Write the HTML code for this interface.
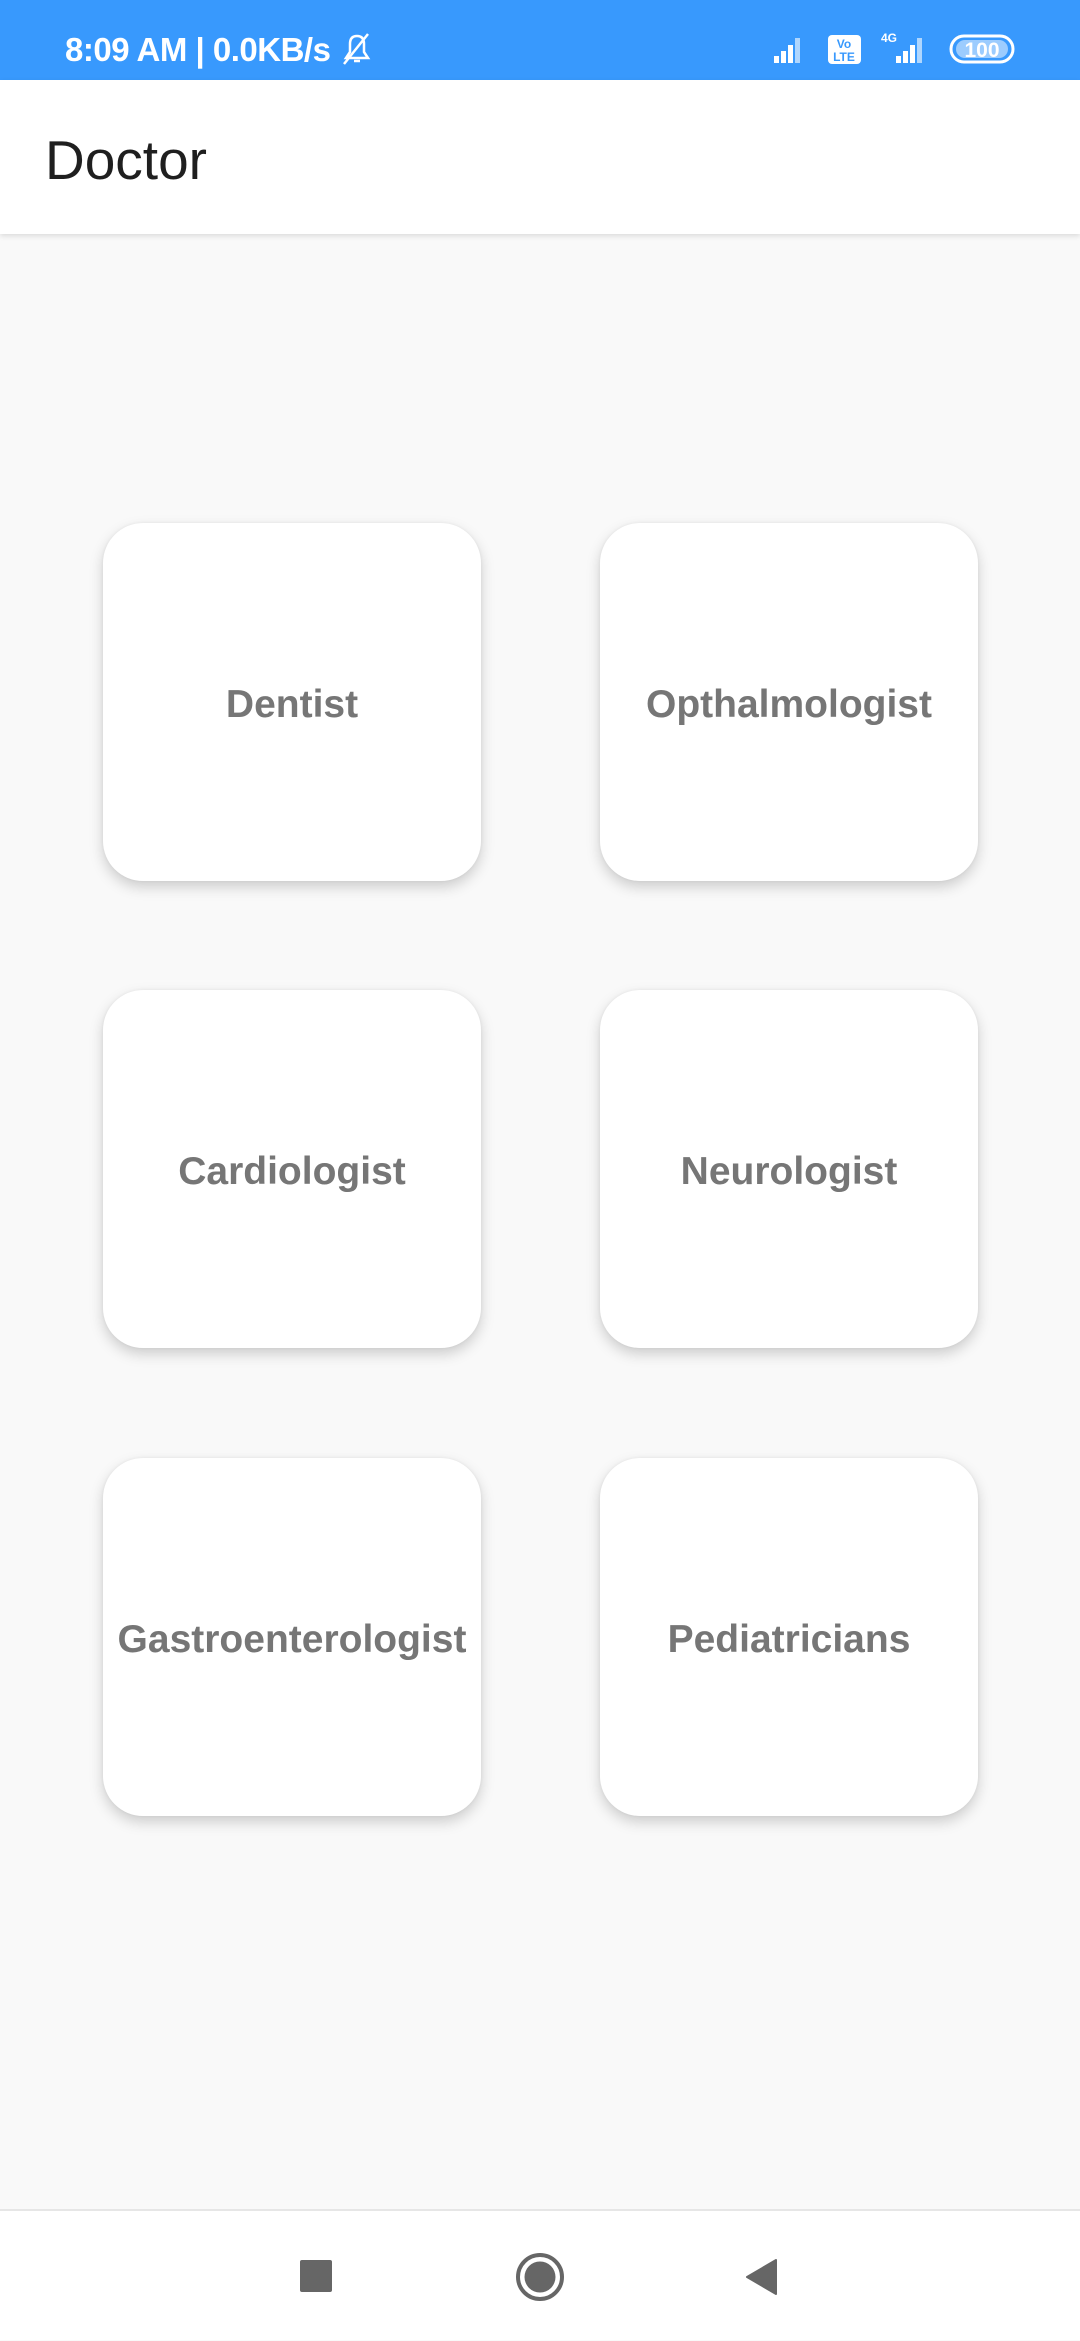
<!DOCTYPE html>
<html><head><meta charset="utf-8"><style>
*{margin:0;padding:0;box-sizing:border-box}
body{width:1080px;height:2340px;background:#f9f9f9;font-family:"Liberation Sans",sans-serif;position:relative;overflow:hidden}
.sb{position:absolute;left:0;top:0;width:1080px;height:80px;background:#3899fd;color:#fff}
.sb .t{position:absolute;left:65px;top:31px;font-size:33px;font-weight:bold;letter-spacing:-0.5px}
.ab{position:absolute;left:0;top:80px;width:1080px;height:154px;background:#fff;box-shadow:0 2px 5px rgba(0,0,0,0.12)}
.ab span{position:absolute;left:45px;top:48px;font-size:55px;color:#1f1f1f}
.card{position:absolute;width:378px;height:358px;background:#fff;border-radius:40px;box-shadow:0 6px 14px rgba(0,0,0,0.18),0 0 3px rgba(0,0,0,0.06);display:flex;align-items:center;justify-content:center;font-size:39px;font-weight:bold;color:#767676;padding-top:6px}
.nav{position:absolute;left:0;top:2209px;width:1080px;height:131px;background:#fff;border-top:2px solid #e6e6e6}
</style></head><body>
<div class="sb"><span class="t">8:09 AM | 0.0KB/s</span>
<svg style="position:absolute;left:338px;top:32px" width="38" height="34" viewBox="0 0 38 34"><path d="M8 26 L30 26 L26 20 L26 12 Q26 4 19 4 Q12 4 12 12 L12 20 Z M16 29 L22 29 M6 32 L30 2" stroke="#fff" stroke-width="2.5" fill="none"/></svg>
<svg style="position:absolute;left:770px;top:30px" width="250" height="36" viewBox="0 0 250 36">
<g fill="#fff"><rect x="4" y="26" width="5" height="7"/><rect x="11" y="21" width="5" height="12"/><rect x="18" y="15" width="5" height="18"/><rect x="25" y="8" width="5" height="25" opacity=".6"/>
<rect x="58" y="5" width="33" height="29" rx="4"/></g>
<text x="74" y="18" font-size="12" font-weight="bold" fill="#3899fd" text-anchor="middle" font-family="Liberation Sans">Vo</text>
<text x="74" y="31" font-size="12" font-weight="bold" fill="#3899fd" text-anchor="middle" font-family="Liberation Sans">LTE</text>
<text x="111" y="12" font-size="12" font-weight="bold" fill="#fff" font-family="Liberation Sans">4G</text>
<g fill="#fff"><rect x="126" y="26" width="5" height="7"/><rect x="133" y="21" width="5" height="12"/><rect x="140" y="15" width="5" height="18"/><rect x="147" y="8" width="5" height="25" opacity=".6"/></g>
<rect x="181" y="6" width="62" height="26" rx="13" fill="none" stroke="#fff" stroke-width="3"/>
<rect x="186" y="10" width="52" height="18" rx="9" fill="#fff" opacity=".5"/>
<text x="212" y="27" font-size="21" font-weight="bold" fill="#fff" text-anchor="middle" font-family="Liberation Sans">100</text>
</svg></div>
<div class="ab"><span>Doctor</span></div>
<div class="card" style="left:103px;top:523px">Dentist</div>
<div class="card" style="left:600px;top:523px">Opthalmologist</div>
<div class="card" style="left:103px;top:990px">Cardiologist</div>
<div class="card" style="left:600px;top:990px">Neurologist</div>
<div class="card" style="left:103px;top:1458px">Gastroenterologist</div>
<div class="card" style="left:600px;top:1458px">Pediatricians</div>
<div class="nav">
<svg style="position:absolute;left:0;top:-1px" width="1080" height="131" viewBox="0 0 1080 131">
<rect x="300" y="50" width="32" height="32" rx="2" fill="#666"/>
<circle cx="540" cy="67" r="22" fill="none" stroke="#666" stroke-width="4"/>
<circle cx="540" cy="67" r="15.5" fill="#666"/>
<path d="M776 50 L776 84 L747 67 Z" fill="#666" stroke="#666" stroke-width="2" stroke-linejoin="round"/>
</svg></div>
</body></html>
